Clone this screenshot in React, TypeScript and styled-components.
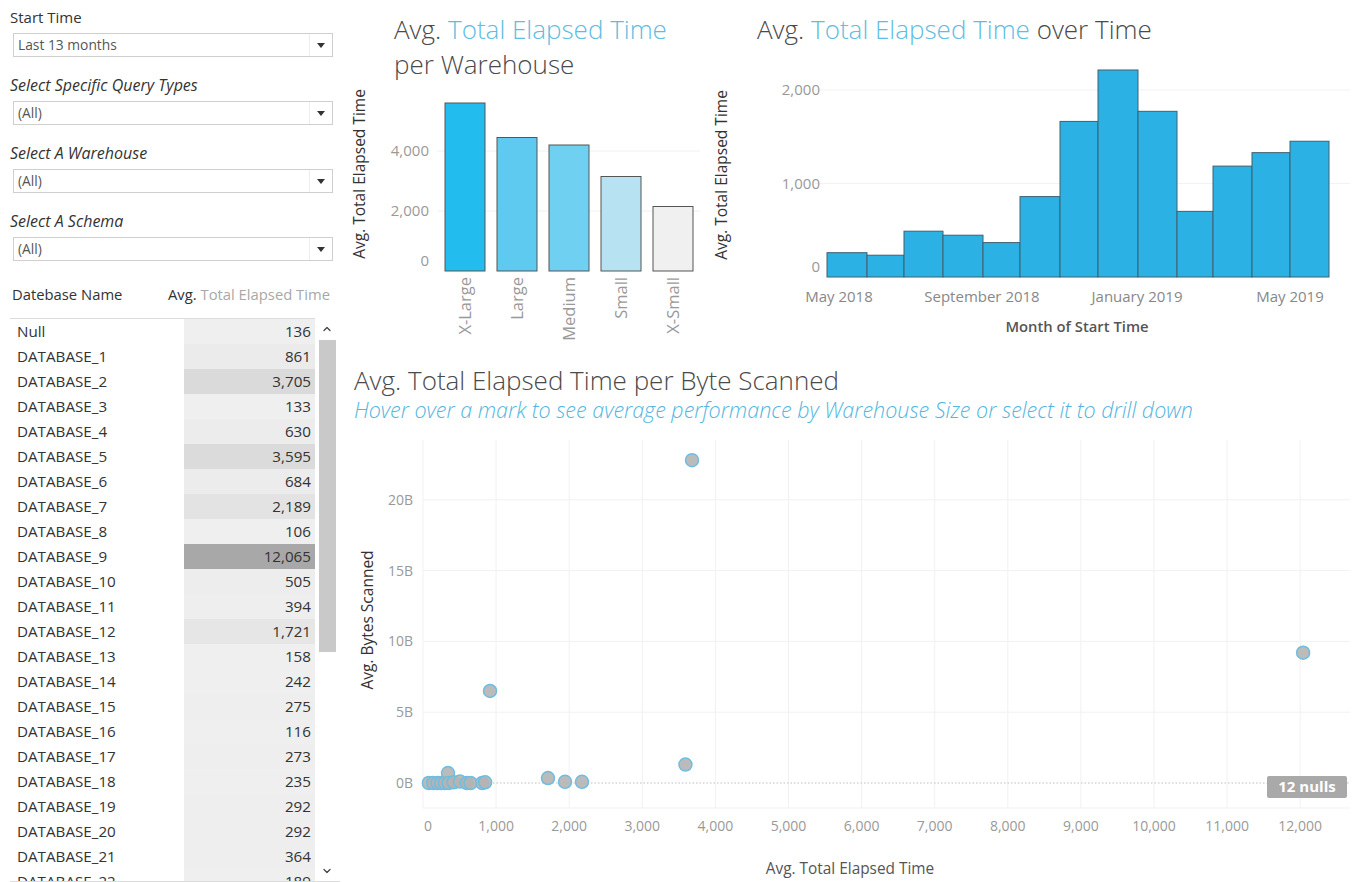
import React from 'react'
import styled, {createGlobalStyle} from 'styled-components'
import {ChevronDown, ChevronUp} from 'lucide-react'

const FONT = "'Open Sans', 'Noto Sans', 'Liberation Sans', sans-serif"

const GlobalStyle = createGlobalStyle`
  html, body {
    margin: 0;
    padding: 0;
    background: #fff;
  }
  body {
    font-family: ${FONT};
    color: #333;
  }
`

// ---------- data ----------

const filters = [
  {label: 'Start Time', value: 'Last 13 months', italic: false},
  {label: 'Select Specific Query Types', value: '(All)', italic: true},
  {label: 'Select A Warehouse', value: '(All)', italic: true},
  {label: 'Select A Schema', value: '(All)', italic: true}
]

const databases: [string, number][] = [
  ['Null', 136],
  ['DATABASE_1', 861],
  ['DATABASE_2', 3705],
  ['DATABASE_3', 133],
  ['DATABASE_4', 630],
  ['DATABASE_5', 3595],
  ['DATABASE_6', 684],
  ['DATABASE_7', 2189],
  ['DATABASE_8', 106],
  ['DATABASE_9', 12065],
  ['DATABASE_10', 505],
  ['DATABASE_11', 394],
  ['DATABASE_12', 1721],
  ['DATABASE_13', 158],
  ['DATABASE_14', 242],
  ['DATABASE_15', 275],
  ['DATABASE_16', 116],
  ['DATABASE_17', 273],
  ['DATABASE_18', 235],
  ['DATABASE_19', 292],
  ['DATABASE_20', 292],
  ['DATABASE_21', 364],
  ['DATABASE_22', 189]
]

const warehouses = [
  {name: 'X-Large', value: 5600, color: '#22bcee'},
  {name: 'Large', value: 4450, color: '#5ecaef'},
  {name: 'Medium', value: 4200, color: '#70d0f1'},
  {name: 'Small', value: 3150, color: '#b7e2f1'},
  {name: 'X-Small', value: 2150, color: '#f0f0f0'}
]

// month bars: left edge, right edge (page x), value
const months: [number, number, number][] = [
  [827, 867, 260],
  [867, 904, 233],
  [904, 943, 490],
  [943, 983, 447],
  [983, 1020, 368],
  [1020, 1060, 860],
  [1060, 1098, 1664],
  [1098, 1138, 2214],
  [1138, 1177, 1772],
  [1177, 1213, 702],
  [1213, 1252, 1186],
  [1252, 1290, 1330],
  [1290, 1329, 1452]
]

const points: [number, number][] = [
  [80, 0], [140, 0], [200, 0], [250, 0], [300, 0], [342, 0.7], [350, 0],
  [420, 0.05], [506, 0.1], [600, 0], [650, 0], [810, 0], [850, 0.05],
  [917, 6.5], [1710, 0.35], [1943, 0.08], [2175, 0.08], [3590, 1.3],
  [3680, 22.8], [12040, 9.2]
]

const fmt = (n: number) => n.toLocaleString('en-US')
const shade = (v: number) => {
  const c = Math.round(240 - (v / 12065) * 72)
  return `rgb(${c},${c},${c})`
}

// ---------- layout ----------

const Page = styled.div`
  display: grid;
  grid-template-columns: 340px 1fr;
  width: 1362px;
  height: 882px;
  overflow: hidden;
`

const Sidebar = styled.aside`
  display: flex;
  flex-direction: column;
  padding-top: 7px;
  min-height: 0;
`

const Filters = styled.div`
  display: flex;
  flex-direction: column;
`

const FilterGroup = styled.div`
  display: flex;
  flex-direction: column;
  gap: 6px;
  margin-bottom: 18px;
  padding-left: 10px;
  &:last-child {
    margin-bottom: 0;
  }
`

const FilterLabel = styled.div<{$italic: boolean}>`
  font-size: ${p => (p.$italic ? 16 : 15)}px;
  line-height: 20px;
  color: #333;
  font-style: ${p => (p.$italic ? 'italic' : 'normal')};
  white-space: nowrap;
`

const Select = styled.div`
  display: flex;
  align-items: stretch;
  height: 22px;
  width: 318px;
  margin-left: 3px;
  border: 1px solid #cfcfcf;
  background: #fff;
`

const SelectValue = styled.div`
  flex: 1;
  padding-left: 4px;
  font-size: 13.8px;
  line-height: 22px;
  color: #555;
`

const SelectArrow = styled.div`
  width: 22px;
  border-left: 1px solid #ececec;
  display: flex;
  align-items: center;
  justify-content: center;
  &::after {
    content: '';
    border-left: 4px solid transparent;
    border-right: 4px solid transparent;
    border-top: 5px solid #333;
  }
`

const Table = styled.div`
  margin-top: 8px;
  display: flex;
  flex-direction: column;
  flex: 1;
  min-height: 0;
`

const TableHead = styled.div`
  height: 49px;
  display: flex;
  align-items: center;
  justify-content: space-between;
  margin: 0 25px 0 10px;
  padding-left: 2px;
  font-size: 14.8px;
  border-bottom: 1px solid #dcdcdc;
  white-space: nowrap;
`

const HeadName = styled.span`
  color: #333;
`

const HeadMeasure = styled.span`
  color: #333;
  margin-right: -15px;
  span {
    color: #a8a8a8;
  }
`

const TableBody = styled.div`
  flex: 1;
  min-height: 0;
  display: flex;
  margin-left: 10px;
  border-bottom: 1px solid #dcdcdc;
`

const Rows = styled.div`
  display: flex;
  flex-direction: column;
  overflow: hidden;
`

const Row = styled.div`
  display: grid;
  grid-template-columns: 174px 131px;
  height: 25px;
  flex-shrink: 0;
`

const NameCell = styled.div`
  padding-left: 7px;
  font-size: 15.2px;
  line-height: 25px;
  color: #333;
`

const ValueCell = styled.div<{$bg: string}>`
  background: ${p => p.$bg};
  text-align: right;
  padding-right: 4px;
  font-size: 15.2px;
  line-height: 25px;
  color: #333;
`

const ScrollBar = styled.div`
  width: 18px;
  margin-left: 3px;
  display: flex;
  flex-direction: column;
  align-items: center;
`

const ScrollButton = styled.div`
  height: 20px;
  display: flex;
  align-items: center;
  justify-content: center;
  color: #444;
`

const ScrollThumb = styled.div`
  width: 17px;
  height: 312px;
  margin-top: 1px;
  background: #c9c9c9;
`

const ScrollSpacer = styled.div`
  flex: 1;
`

const Main = styled.main`
  display: grid;
  grid-template-rows: 340px 1fr;
  min-width: 0;
`

const TopRow = styled.div`
  display: grid;
  grid-template-columns: 360px 1fr;
`

const Panel = styled.section`
  display: flex;
  flex-direction: column;
  min-width: 0;
`

const ChartTitle = styled.h2<{$pad: number; $height: number}>`
  margin: 0;
  padding-left: ${p => p.$pad}px;
  height: ${p => p.$height}px;
  box-sizing: border-box;
  padding-top: 12px;
  font-family: ${FONT};
  font-weight: 300;
  font-size: 26px;
  line-height: 35px;
  color: #4a4a4a;
  white-space: nowrap;
`

const Accent = styled.span`
  color: #5dbde2;
`

const ScatterHead = styled.div`
  height: 90px;
  padding-top: 24px;
  box-sizing: border-box;
`

const ScatterTitle = styled.h2`
  margin: 0;
  padding-left: 14px;
  font-weight: 300;
  font-size: 26px;
  line-height: 32px;
  color: #4a4a4a;
`

const SubTitle = styled.div`
  padding-left: 14px;
  font-size: 21.5px;
  font-style: italic;
  font-weight: 300;
  color: #52b6df;
  line-height: 28px;
  white-space: nowrap;
`

const ChartSvg = styled.svg`
  display: block;
  font-family: ${FONT};
  overflow: visible;
`

// ---------- charts ----------

const WarehouseChart = () => {
  const zero = 186
  const k = 0.03
  return (
    <ChartSvg width={360} height={255}>
      {[2000, 4000].map(v => (
        <line key={v} x1={97} x2={360} y1={zero - v * k} y2={zero - v * k} stroke="#f0f0f0" />
      ))}
      <text transform="translate(25 89) rotate(-90)" textAnchor="middle" fontSize={15.5} fill="#333">
        Avg. Total Elapsed Time
      </text>
      {[0, 2000, 4000].map(v => (
        <text
          key={v}
          x={89}
          y={v === 0 ? zero - 5 : zero - v * k + 5}
          textAnchor="end"
          fontSize={15}
          fill="#999"
        >
          {fmt(v)}
        </text>
      ))}
      {warehouses.map((w, i) => {
        const x = 105 + i * 52
        const h = w.value * k
        return (
          <g key={w.name}>
            <rect x={x} y={zero - h} width={40} height={h} fill={w.color} stroke="#555" strokeWidth={1} />
            <text
              transform={`translate(${x + 26} ${zero + 6}) rotate(-90)`}
              textAnchor="end"
              fontSize={16.5}
              fill="#999"
            >
              {w.name}
            </text>
          </g>
        )
      })}
    </ChartSvg>
  )
}

const TimeChart = () => {
  const ox = 700
  const zero = 227
  const k = 0.0935
  const ticks = [
    {label: 'May 2018', x: 839},
    {label: 'September 2018', x: 982},
    {label: 'January 2019', x: 1137},
    {label: 'May 2019', x: 1290}
  ]
  return (
    <ChartSvg width={662} height={290}>
      {[1000, 2000].map(v => (
        <line key={v} x1={115} x2={650} y1={zero - v * k} y2={zero - v * k} stroke="#f2f2f2" />
      ))}
      <text transform="translate(27 125) rotate(-90)" textAnchor="middle" fontSize={15.5} fill="#333">
        Avg. Total Elapsed Time
      </text>
      {[0, 1000, 2000].map(v => (
        <text
          key={v}
          x={120}
          y={v === 0 ? zero - 5 : zero - v * k + 5}
          textAnchor="end"
          fontSize={15}
          fill="#999"
        >
          {fmt(v)}
        </text>
      ))}
      {months.map(([a, b, v], i) => (
        <rect
          key={i}
          x={a - ox}
          y={zero - v * k}
          width={b - a}
          height={v * k}
          fill="#2cb1e5"
          stroke="#40606e"
          strokeWidth={1}
        />
      ))}
      {ticks.map(t => (
        <text key={t.label} x={t.x - ox} y={252} textAnchor="middle" fontSize={15} fill="#888">
          {t.label}
        </text>
      ))}
      <text x={377} y={282} textAnchor="middle" fontSize={14.8} fontWeight={600} fill="#555">
        Month of Start Time
      </text>
    </ChartSvg>
  )
}

const ScatterChart = () => {
  const x0 = 83
  const kx = 0.0731
  const zero = 353
  const ky = 14.16
  const xs = Array.from({length: 13}, (_, i) => i * 1000)
  return (
    <ChartSvg width={1022} height={452}>
      {xs.map(v => (
        <line key={v} x1={x0 + v * kx} x2={x0 + v * kx} y1={10} y2={378} stroke="#f1f1f1" />
      ))}
      {[5, 10, 15, 20].map(v => (
        <line key={v} x1={x0} x2={1010} y1={zero - v * ky} y2={zero - v * ky} stroke="#f1f1f1" />
      ))}
      <line x1={x0} x2={1010} y1={378} y2={378} stroke="#f1f1f1" />
      <line x1={x0} x2={1010} y1={zero} y2={zero} stroke="#bdbdbd" strokeDasharray="1.5 2" />
      <text transform="translate(33 190) rotate(-90)" textAnchor="middle" fontSize={15.5} fill="#333">
        Avg. Bytes Scanned
      </text>
      {[0, 5, 10, 15, 20].map(v => (
        <text key={v} x={73} y={zero - v * ky + 5} textAnchor="end" fontSize={14} fill="#999">
          {v}B
        </text>
      ))}
      {xs.map(v => (
        <text
          key={v}
          x={x0 + v * kx + (v === 0 ? 5 : 0)}
          y={401}
          textAnchor="middle"
          fontSize={14}
          fill="#999"
        >
          {fmt(v)}
        </text>
      ))}
      {points.map(([x, y], i) => (
        <circle
          key={i}
          cx={x0 + x * kx}
          cy={zero - y * ky}
          r={6.5}
          fill="#b4b4b4"
          fillOpacity={0.9}
          stroke="#6fbde0"
          strokeWidth={1.5}
        />
      ))}
      <rect x={927} y={346} width={80} height={22} rx={2} fill="#a9a9a9" />
      <text x={967} y={362} textAnchor="middle" fontSize={15} fontWeight={700} fill="#fff">
        12 nulls
      </text>
      <text x={510} y={444} textAnchor="middle" fontSize={15.4} fill="#555">
        Avg. Total Elapsed Time
      </text>
    </ChartSvg>
  )
}

// ---------- app ----------

export default function App() {
  return (
    <>
      <GlobalStyle />
      <Page>
        <Sidebar>
          <Filters>
            {filters.map(f => (
              <FilterGroup key={f.label}>
                <FilterLabel $italic={f.italic}>{f.label}</FilterLabel>
                <Select>
                  <SelectValue>{f.value}</SelectValue>
                  <SelectArrow />
                </Select>
              </FilterGroup>
            ))}
          </Filters>
          <Table>
            <TableHead>
              <HeadName>Datebase Name</HeadName>
              <HeadMeasure>
                Avg. <span>Total Elapsed Time</span>
              </HeadMeasure>
            </TableHead>
            <TableBody>
              <Rows>
                {databases.map(([name, v]) => (
                  <Row key={name}>
                    <NameCell>{name}</NameCell>
                    <ValueCell $bg={shade(v)}>{fmt(v)}</ValueCell>
                  </Row>
                ))}
              </Rows>
              <ScrollBar>
                <ScrollButton>
                  <ChevronUp size={12} strokeWidth={2.5} />
                </ScrollButton>
                <ScrollThumb />
                <ScrollSpacer />
                <ScrollButton>
                  <ChevronDown size={12} strokeWidth={2.5} />
                </ScrollButton>
              </ScrollBar>
            </TableBody>
          </Table>
        </Sidebar>
        <Main>
          <TopRow>
            <Panel>
              <ChartTitle $pad={54} $height={85}>
                Avg. <Accent>Total Elapsed Time</Accent>
                <br />
                per Warehouse
              </ChartTitle>
              <WarehouseChart />
            </Panel>
            <Panel>
              <ChartTitle $pad={57} $height={50}>
                Avg. <Accent>Total Elapsed Time</Accent> over Time
              </ChartTitle>
              <TimeChart />
            </Panel>
          </TopRow>
          <Panel>
            <ScatterHead>
              <ScatterTitle>Avg. Total Elapsed Time per Byte Scanned</ScatterTitle>
              <SubTitle>
                Hover over a mark to see average performance by Warehouse Size or select it to drill down
              </SubTitle>
            </ScatterHead>
            <ScatterChart />
          </Panel>
        </Main>
      </Page>
    </>
  )
}
